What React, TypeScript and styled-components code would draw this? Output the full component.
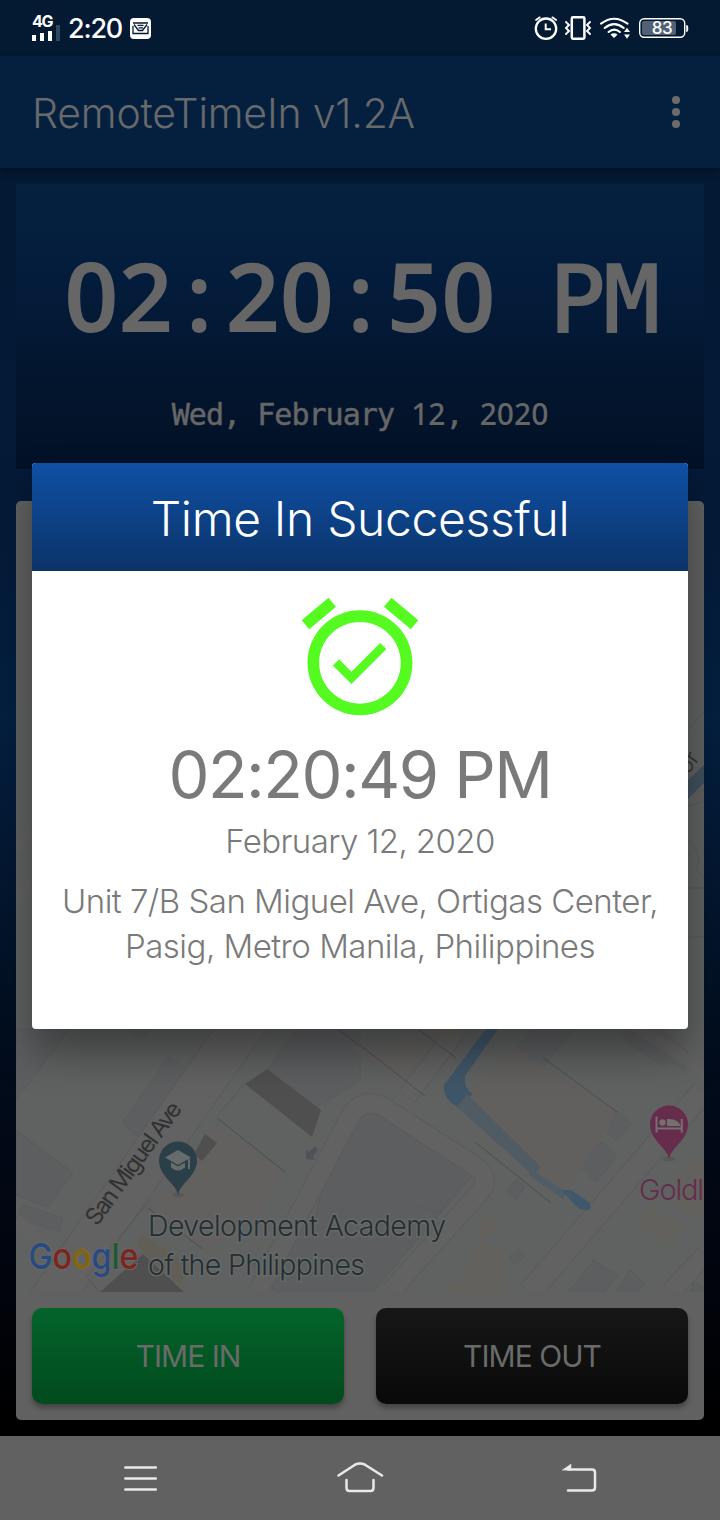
import React from "react";
import styled, { createGlobalStyle } from "styled-components";

const GlobalStyle = createGlobalStyle`
  * { box-sizing: border-box; }
  body { margin: 0; background: #000; }
`;

const Screen = styled.div`
  position: relative;
  width: 720px;
  height: 1520px;
  display: flex;
  flex-direction: column;
  overflow: hidden;
  font-family: Inter, "Liberation Sans", sans-serif;
  background: linear-gradient(180deg, #041831 0, #041a37 480px, #041f40 720px, #03162e 900px, #020c1c 1060px, #01050f 1250px, #000 1420px);
`;

const StatusBar = styled.header`
  height: 56px;
  flex: none;
  display: flex;
  align-items: center;
  background: #041932;
  color: #fff;
  padding: 0 31px 0 32px;
`;

const Signal = styled.div`
  width: 28px;
  height: 25px;
  display: flex;
  flex-direction: column;
  justify-content: space-between;
`;

const SignalBars = styled.svg`
  display: block;
  margin-top: -5px;
`;

const NetworkLabel = styled.span`
  font-size: 16px;
  line-height: 10px;
  font-weight: 700;
  letter-spacing: -1.2px;
`;

const StatusTime = styled.span`
  margin-left: 8px;
  width: 62px;
  font-size: 27px;
  font-weight: 500;
  letter-spacing: -1.2px;
`;

const StatusIcons = styled.div`
  margin-left: auto;
  display: flex;
  align-items: center;
`;

const AppBar = styled.div`
  height: 112px;
  flex: none;
  display: flex;
  align-items: center;
  justify-content: space-between;
  padding: 0 40px 0 32px;
  background: #05203f;
  box-shadow: 0 3px 8px rgba(0, 0, 0, 0.35);
`;

const AppTitle = styled.h1`
  margin: 1px 0 0;
  color: #68696b;
  font-size: 41px;
  font-weight: 350;
  letter-spacing: -0.2px;
`;

const MenuDots = styled.div`
  display: flex;
  flex-direction: column;
  gap: 4px;
`;

const Dot = styled.i`
  width: 8px;
  height: 8px;
  border-radius: 50%;
  background: #6b6b6b;
`;

const Content = styled.main`
  flex: 1;
  display: flex;
  flex-direction: column;
  gap: 32px;
  padding: 16px;
`;

const ClockPanel = styled.section`
  height: 285px;
  flex: none;
  display: flex;
  flex-direction: column;
  align-items: center;
  color: #666;
  font-family: "Noto Sans", sans-serif;
  white-space: pre;
  background: linear-gradient(180deg, #05213f 0%, #041c3b 35%, #03162f 65%, #021126 100%);
`;

const ClockTime = styled.div`
  margin-top: 44px;
  padding-left: 2px;
  font-size: 95px;
  line-height: 134px;
  font-weight: 600;
`;

const Colon = styled.span`
  padding: 0 13.2px;
`;

const MonoLetters = styled.span<{ $size: number; $track: number; $bold: number }>`
  font-family: "DejaVu Sans Mono", monospace;
  font-weight: 400;
  font-size: ${(p) => p.$size}px;
  letter-spacing: ${(p) => p.$track}px;
  -webkit-text-stroke: ${(p) => p.$bold}px #666;
`;

const ClockDate = styled.div`
  margin-top: 26px;
  font-size: 30px;
  line-height: 42px;
  font-weight: 500;
`;

const Card = styled.section`
  flex: 1;
  display: flex;
  flex-direction: column;
  border-radius: 5px;
  overflow: hidden;
  background: #616161;
`;

const CardTop = styled.div`
  height: 200px;
  flex: none;
`;

const MapView = styled.svg`
  display: block;
  flex: none;
  width: 688px;
  height: 591px;
`;

const ButtonRow = styled.div`
  display: grid;
  grid-template-columns: 1fr 1fr;
  gap: 32px;
  padding: 16px;
`;

const ActionButton = styled.button<{ $from: string; $to: string }>`
  height: 96px;
  border: 0;
  border-radius: 10px;
  color: #696b69;
  font: 400 30px Inter, sans-serif;
  letter-spacing: -0.95px;
  background: linear-gradient(180deg, ${(p) => p.$from}, ${(p) => p.$to});
  box-shadow: 0 4px 5px rgba(0, 0, 0, 0.3);
`;

const NavBar = styled.nav`
  height: 84px;
  flex: none;
  display: flex;
  align-items: center;
  justify-content: space-between;
  padding: 0 120px;
  background: #616161;
`;

const Dialog = styled.div`
  position: absolute;
  left: 32px;
  top: 463px;
  width: 656px;
  height: 566px;
  border-radius: 4px;
  overflow: hidden;
  display: flex;
  flex-direction: column;
  background: #fff;
  color: #7a7a7a;
  box-shadow: 0 24px 40px rgba(0, 0, 0, 0.36);
`;

const DialogHeader = styled.h2`
  margin: 0;
  height: 108px;
  flex: none;
  display: flex;
  align-items: center;
  justify-content: center;
  padding-top: 3px;
  color: #fff;
  font-size: 48px;
  font-weight: 350;
  letter-spacing: -0.35px;
  background: linear-gradient(180deg, #0f50a5, #0b3368);
`;

const DialogBody = styled.div`
  display: flex;
  flex-direction: column;
  align-items: center;
  padding-top: 16px;
  text-align: center;
`;

const DialogTime = styled.div`
  margin-top: 2px;
  font-size: 65px;
  line-height: 92px;
  font-weight: 370;
  letter-spacing: -1.5px;
`;

const DialogDate = styled.div`
  font-size: 33px;
  line-height: 40px;
  font-weight: 360;
  letter-spacing: -0.6px;
`;

const DialogAddress = styled.p`
  margin: 18px 0 0;
  font-size: 33px;
  line-height: 45px;
  font-weight: 360;
  letter-spacing: -0.52px;
`;

const MailIcon = () => (
  <svg width="21" height="21" viewBox="0 0 21 21">
    <rect width="21" height="21" rx="4" fill="#fff" />
    <path d="M3 8v7.500h15V8M3 5h15M4 6.500l4.500 6h4l4.500-6M7.500 7.300h6M8.500 9.800h4.500" fill="none" stroke="#041932" strokeWidth="1.300" />
  </svg>
);

const SystemIcons = () => (
  <svg width="156" height="26" viewBox="533 15 156 26" fill="none" stroke="#fff" strokeLinecap="round">
    <circle cx="546" cy="28.7" r="10.2" strokeWidth="2.3" />
    <path d="M545.7 23.5v5.7h5.3" strokeWidth="2" strokeLinecap="butt" />
    <path d="M536 20l3.8-2.7M556.200 20l-3.8-2.7" strokeWidth="1.7" />
    <rect x="571.800" y="17.300" width="12.600" height="21.400" rx="1.200" strokeWidth="2.500" />
    <path d="M566 22l3 3-3 3 3 3-3 3M590 22l-3 3 3 3-3 3 3 3" strokeWidth="1.900" />
    <path d="M601 23.600q13-9.800 26.500 0M604.700 28q9.500-7.800 19 0M608.600 32q5.700-4.800 11.300 0" strokeWidth="2" />
    <path d="M610.500 34.600q3.500-2.600 7 0l-3.500 3.400zM624 32l3-4.200 3 4.200zM624 34.600h6l-3 4.200z" fill="#fff" stroke="none" />
    <rect x="639.700" y="18.700" width="45" height="18.600" rx="4.500" strokeWidth="1.400" />
    <rect x="642" y="21" width="34" height="14" rx="2" fill="#526274" stroke="none" />
    <path d="M686.200 25q2 0 2 2v3q0 2-2 2z" fill="#fff" stroke="none" />
    <text x="662" y="34" textAnchor="middle" fontFamily="Inter, sans-serif" fontSize="17" letterSpacing="-0.500" fontWeight="450" fill="#fff" stroke="none">83</text>
  </svg>
);

const pin = "M0 0C-1.500-11-19-19-19-34.500a19 19 0 0 1 38 0C19-19 1.500-11 0 0z";

const StreetMap = () => (
  <MapView viewBox="16 701 688 591">
    <rect x="16" y="701" width="688" height="591" fill="#5f6261" />
    {/* building blocks */}
    <g fill="#5d5e60" stroke="#585a5d" strokeWidth="0.700">
      <path d="M16 1100V1029h54zM16 1130l57 43-25 34-32-12zM127 1029l13 11 10-11zM168 1057l22 14-52 66-16-14zM24 1205l39 13-4 13-42-13zM297 1029h63v52l-46 28-46-40z" />
      <path d="M533 1029h41l-31 39-27-19zM625 1029h36l32 28-8 13-16-9-6 5-43-30zM617 1110l14 15-15 15-9-6zM602 1142l15 14-21 26-21-20zM516 1179l9 7-8 13-10-8zM519 1249l6 8-11 7-5-7zM594 1260l24 16-14 16h-36zM630 1270l14 13-6 9h-22zM694 1281l10 8v3h-14z" />
      <path d="M340 1120l35-12 98 67-100 117h-97l-24-28 64-50z" />
      <path d="M416 1178l33 21-10 15-41-17z" />
    </g>
    <g fill="#626160">
      <path d="M390 1040l30-11h53l-52 68-71-50zM217 1124l68 48-40 52-62-28zM148 1210l55-60 65 55-60 45z" />
      <path d="M466 1092l48-45 102 64-49 82-70-50z" fill="#62605e" />
    </g>
    {/* streets */}
    <g fill="none" stroke="#595a59" strokeLinejoin="round">
      <path d="M16 1350 250 1015" strokeWidth="44" />
      <path d="M704 1090 530 1292" strokeWidth="24" />
      <path d="M258 1292 352 1113q12-15 30-7l93 60q16 12 5 26l-90 100M465 1020l-58 76M705 1255l-35 37" strokeWidth="20" />
    </g>
    <g fill="none" stroke="#626262" strokeLinejoin="round">
      <path d="M16 1350 250 1015" strokeWidth="42.500" />
      <path d="M704 1090 530 1292" strokeWidth="22.500" />
      <path d="M258 1292 352 1113q12-15 30-7l93 60q16 12 5 26l-90 100M465 1020l-58 76M705 1255l-35 37" strokeWidth="18.500" />
      <path d="M16 1219l42 37M16 850l60-70M16 900l50-55M620 1015l90 60" strokeWidth="12" />
    </g>
    <g fill="none" stroke="#484a49" strokeWidth="0.800">
      <path d="M217 1118l68 54M148 1208l55 41M360 1045l65 51M418 1029l38 29M542 1057l75 55M475 1142l76 61M338 1029l22 17" />
      <path d="M217 1116l28-33M88 1279l12 13M86 1278l65-79" stroke="#555" />
    </g>
    <path d="M245 1084l22-15 54 41-9 27zM205 1134l12 9-15 18-8-7zM100 1292l43-38 41 38z" fill="#4f4f4f" />
    <path d="M143 1235l46 29-8 22-45-41z" fill="#605e57" stroke="#6b6249" strokeWidth="0.800" />
    <path d="M315 1146l3 4-5 7 2 3-9-1v-9l3 2z" fill="#515259" />
    {/* canal */}
    <path d="M486 1029h12l-33 47q-2 12 8 18l-15 13q-15-7-14-22z" fill="#3f5668" />
    <path d="M467 1094 541 1167l-8 8-76-68z" fill="#515b64" />
    <path d="M533 1170l34 23-4 6-34-24z" fill="#515d66" />
    <path d="M561 1190h10l18 12q5 8-4 8-5 0-9-4z" fill="#40586b" />
    <path d="M688 780l16-15v18l-16 16z" fill="#40515c" />
    {/* outlined parcels */}
    <g fill="#62615d" stroke="#6b6350" strokeWidth="0.900">
      <path d="M491 1218l7 8-12 12-9-9zM482 1242l21 14-4 6 5 5-4 8-28-20zM474 1261l36 31h-64zM654 1208l26 21-12 17-27-23zM698 1162l6 6v52l-24-18 6-12-14-11z" />
      <path d="M434 1029h24l-14 16z" />
      <path d="M692 948l-4 6 8 8v6l8 6" fill="none" />
    </g>
    <g fill="none" stroke="#555756" strokeWidth="0.800">
      <path d="M688 730l16-18M688 795l16-5M688 806l16-5M690 842q14 15 6 28l8 8M688 888h16M688 937h16" />
    </g>
    <g fontFamily="Inter, sans-serif" fontWeight="350">
      <text transform="translate(97 1227) rotate(-54)" fontSize="23.500" fontWeight="400" fill="#303132" textLength="146">San Miguel Ave</text>
      <text transform="translate(688 775) rotate(-54)" fontSize="22" fill="#303030">or</text>
      <g fill="#242d32" fontSize="28.500" stroke="#666968" strokeWidth="3" paintOrder="stroke">
        <text x="148" y="1236" textLength="298">Development Academy</text>
        <text x="148" y="1275" textLength="217">of the Philippines</text>
      </g>
      <text x="639" y="1200" fontSize="29" fill="#662c4c" textLength="65">Goldl</text>
    </g>
    <text x="28.500" y="1268.500" fontFamily="Inter, sans-serif" fontWeight="500" fontSize="36" textLength="110" lengthAdjust="spacingAndGlyphs" stroke="#686868" strokeWidth="2" paintOrder="stroke">
      <tspan fill="#284a82">G</tspan><tspan fill="#7c241d">o</tspan><tspan fill="#846508">o</tspan><tspan fill="#284a82">g</tspan><tspan fill="#1d5a2d">l</tspan><tspan fill="#7c241d">e</tspan>
    </text>
    <ellipse cx="178" cy="1195" rx="6" ry="2.500" fill="#585858" />
    <g transform="translate(178 1195)">
      <path d={pin} fill="#2b3f48" />
      <path d="M-13-37.500 0-45l13 7.500L0-30zM-7-32.500l7 4 7-4v5q-7 6-14 0zM10-36h2v10h-2z" fill="#686b6c" />
    </g>
    <ellipse cx="669" cy="1159" rx="6" ry="2.500" fill="#585858" />
    <g transform="translate(669 1159)">
      <path d={pin} fill="#662c4c" />
      <path d="M-12.500-42.500v16M12.800-40v13.500M-12.500-30.500h25" stroke="#727071" strokeWidth="2" fill="none" />
      <circle cx="-6.500" cy="-36.500" r="3.200" fill="#727071" />
      <path d="M-2-40q10-1 14 7H-2z" fill="#727071" />
    </g>
  </MapView>
);

const NavIcon = ({ d, fill }: { d: string; fill?: string }) => (
  <svg width="48" height="34" viewBox="0 0 48 34" fill="none" stroke="#e9e9e9" strokeWidth="2.500" strokeLinecap="round" strokeLinejoin="round">
    <path d={d} />
    {fill && <path d={fill} fill="#e9e9e9" strokeWidth="0.500" />}
  </svg>
);

export default function App() {
  return (
    <Screen>
      <GlobalStyle />
      <StatusBar>
        <Signal>
          <NetworkLabel>4G</NetworkLabel>
          <SignalBars width="28" height="16" viewBox="0 0 28 16">
            <path d="M0 10h4v6H0zM8 8h4v8H8zM16 6h4v10h-4z" fill="#fff" />
            <path d="M24 0h4v16h-4z" fill="#34455f" />
          </SignalBars>
        </Signal>
        <StatusTime>2:20</StatusTime>
        <MailIcon />
        <StatusIcons><SystemIcons /></StatusIcons>
      </StatusBar>
      <AppBar>
        <AppTitle>RemoteTimeIn v1.2A</AppTitle>
        <MenuDots><Dot /><Dot /><Dot /></MenuDots>
      </AppBar>
      <Content>
        <ClockPanel>
          <ClockTime>
            02<Colon>:</Colon>20<Colon>:</Colon>50<MonoLetters $size={93} $track={-1.9} $bold={2}> PM</MonoLetters>
          </ClockTime>
          <ClockDate>
            <MonoLetters $size={30} $track={-0.96} $bold={0.5}>Wed, February </MonoLetters>12
            <MonoLetters $size={30} $track={-0.96} $bold={0.5}>, </MonoLetters>2020
          </ClockDate>
        </ClockPanel>
        <Card>
          <CardTop />
          <StreetMap />
          <ButtonRow>
            <ActionButton $from="#03642a" $to="#024a1e">TIME IN</ActionButton>
            <ActionButton $from="#171717" $to="#090909">TIME OUT</ActionButton>
          </ButtonRow>
        </Card>
      </Content>
      <NavBar>
        <NavIcon d="M5.300 6.500h30.500M5.300 17.500h30.500M5.300 28.500h30.500" />
        <NavIcon d="M2.500 14.500 19 3.700q5-2.400 10 0L46 14.500M10.500 19v8q0 3 3 3h21q3 0 3-3v-8" />
        <NavIcon d="M16 8.500h24q3 0 3 3v15q0 3-3 3H16" fill="M10.500 9 19 3v6z" />
      </NavBar>
      <Dialog>
        <DialogHeader>Time In Successful</DialogHeader>
        <DialogBody>
          <svg width="140" height="140" viewBox="0 0 24 24" fill="#55fa20">
            <path d="M22 5.720l-4.600-3.860-1.290 1.530 4.600 3.860L22 5.720zM7.880 3.390L6.600 1.860 2 5.710l1.290 1.530 4.590-3.850zM12 4c-4.970 0-9 4.030-9 9s4.020 9 9 9c4.970 0 9-4.030 9-9s-4.030-9-9-9zm0 16c-3.870 0-7-3.130-7-7s3.130-7 7-7 7 3.130 7 7-3.130 7-7 7zm-1.460-5.470L8.410 12.400l-1.060 1.060 3.180 3.180 6-6-1.060-1.060-4.930 4.950z" />
          </svg>
          <DialogTime>02:20:49 PM</DialogTime>
          <DialogDate>February 12, 2020</DialogDate>
          <DialogAddress>Unit 7/B San Miguel Ave, Ortigas Center,<br />Pasig, Metro Manila, Philippines</DialogAddress>
        </DialogBody>
      </Dialog>
    </Screen>
  );
}
